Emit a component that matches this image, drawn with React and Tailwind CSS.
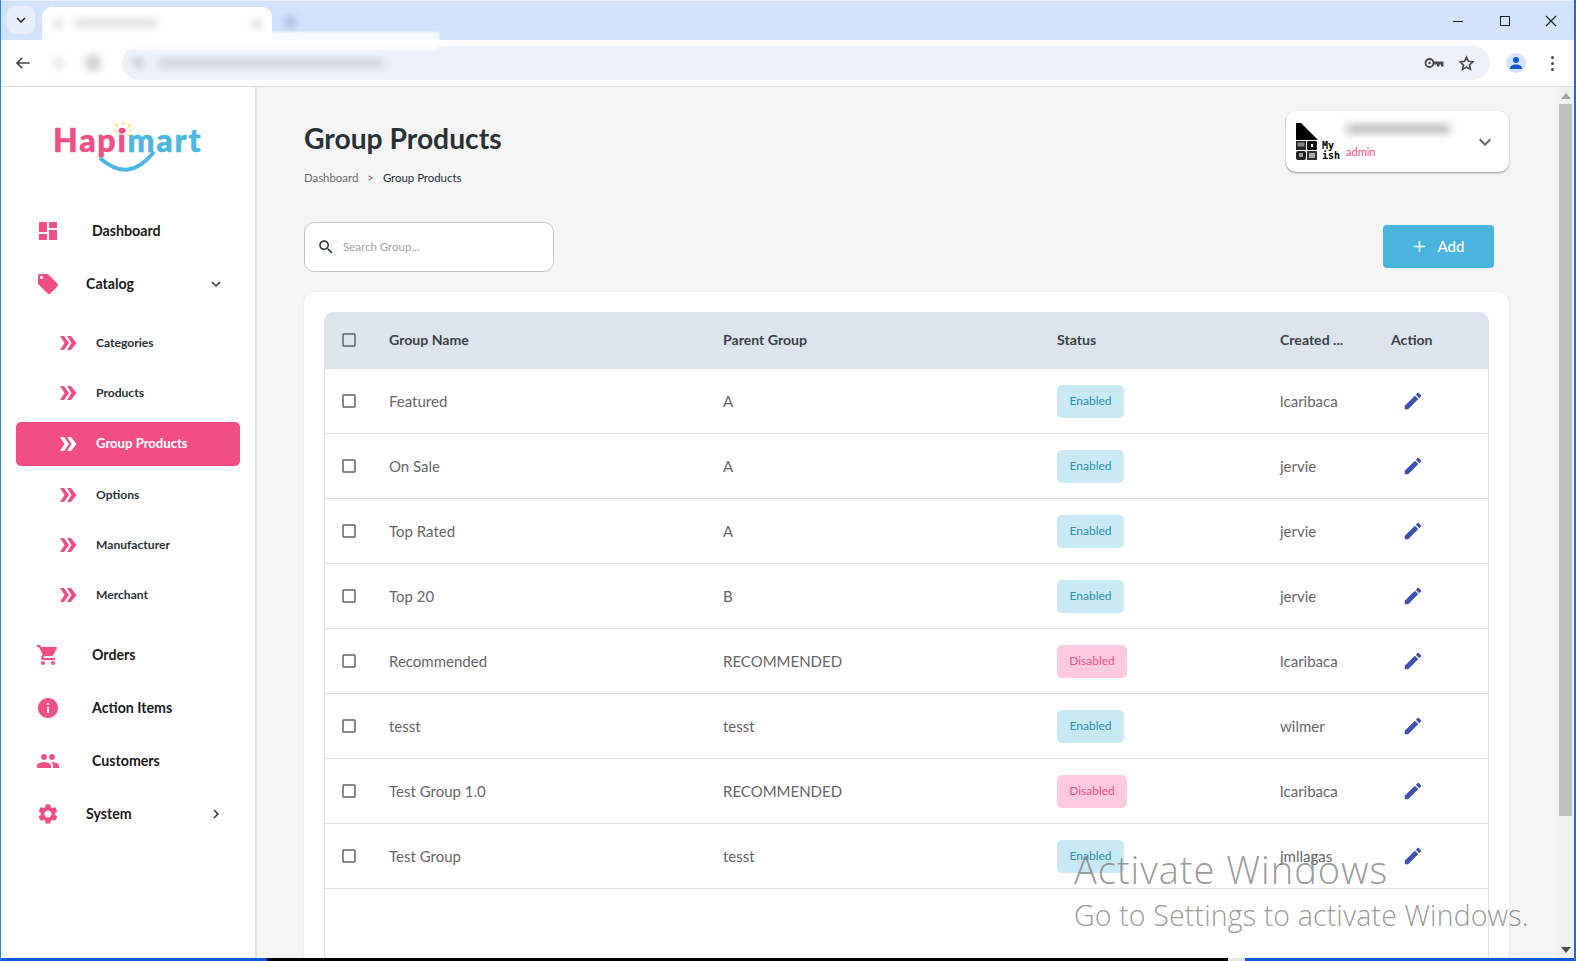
import { Plus } from 'lucide-react';

const paths = {
  dashboard: 'M3 13h8V3H3v10zm0 8h8v-6H3v6zm10 0h8V11h-8v10zm0-18v6h8V3h-8z',
  tag: 'M21.41 11.58l-9-9C12.05 2.22 11.55 2 11 2H4c-1.1 0-2 .9-2 2v7c0 .55.22 1.05.59 1.42l9 9c.36.36.86.58 1.41.58.55 0 1.05-.22 1.41-.59l7-7c.37-.36.59-.86.59-1.41 0-.55-.23-1.06-.59-1.42zM5.5 7C4.67 7 4 6.33 4 5.5S4.67 4 5.5 4 7 4.67 7 5.5 6.33 7 5.5 7z',
  cart: 'M7 18c-1.1 0-1.99.9-1.99 2S5.9 22 7 22s2-.9 2-2-.9-2-2-2zM1 2v2h2l3.6 7.59-1.35 2.45c-.16.28-.25.61-.25.96 0 1.1.9 2 2 2h12v-2H7.42c-.14 0-.25-.11-.25-.25l.03-.12.9-1.63h7.45c.75 0 1.41-.41 1.75-1.03l3.58-6.49c.08-.14.12-.31.12-.48 0-.55-.45-1-1-1H5.21l-.94-2H1zm16 16c-1.1 0-1.99.9-1.99 2s.89 2 1.99 2 2-.9 2-2-.9-2-2-2z',
  info: 'M12 2C6.48 2 2 6.48 2 12s4.48 10 10 10 10-4.48 10-10S17.52 2 12 2zm1 15h-2v-6h2v6zm0-8h-2V7h2v2z',
  people: 'M16 11c1.66 0 2.99-1.34 2.99-3S17.66 5 16 5c-1.66 0-3 1.34-3 3s1.34 3 3 3zm-8 0c1.66 0 2.99-1.34 2.99-3S9.66 5 8 5C6.34 5 5 6.34 5 8s1.34 3 3 3zm0 2c-2.33 0-7 1.17-7 3.5V19h14v-2.5c0-2.33-4.67-3.5-7-3.5zm8 0c-.29 0-.62.02-.97.05 1.16.84 1.97 1.97 1.97 3.45V19h6v-2.5c0-2.33-4.67-3.5-7-3.5z',
  gear: 'M19.14 12.94c.04-.3.06-.61.06-.94 0-.32-.02-.64-.07-.94l2.03-1.58c.18-.14.23-.41.12-.61l-1.92-3.32c-.12-.22-.37-.29-.59-.22l-2.39.96c-.5-.38-1.03-.7-1.62-.94l-.36-2.54c-.04-.24-.24-.41-.48-.41h-3.84c-.24 0-.43.17-.47.41l-.36 2.54c-.59.24-1.13.57-1.62.94l-2.39-.96c-.22-.08-.47 0-.59.22L2.74 8.87c-.12.21-.08.47.12.61l2.03 1.58c-.05.3-.09.63-.09.94s.02.64.07.94l-2.03 1.58c-.18.14-.23.41-.12.61l1.92 3.32c.12.22.37.29.59.22l2.39-.96c.5.38 1.03.7 1.62.94l.36 2.54c.05.24.24.41.48.41h3.84c.24 0 .44-.17.47-.41l.36-2.54c.59-.24 1.13-.56 1.62-.94l2.39.96c.22.08.47 0 .59-.22l1.92-3.32c.12-.22.07-.47-.12-.61l-2.01-1.58zM12 15.6c-1.98 0-3.6-1.62-3.6-3.6s1.62-3.6 3.6-3.6 3.6 1.62 3.6 3.6-1.62 3.6-3.6 3.6z',
  edit: 'M3 17.25V21h3.75L17.81 9.94l-3.75-3.75L3 17.25zM20.71 7.04c.39-.39.39-1.02 0-1.41l-2.34-2.34c-.39-.39-1.02-.39-1.41 0l-1.83 1.83 3.75 3.75 1.83-1.83z',
  search: 'M15.5 14h-.79l-.28-.27C15.41 12.59 16 11.11 16 9.5 16 5.91 13.09 3 9.5 3S3 5.91 3 9.5 5.91 16 9.5 16c1.61 0 3.09-.59 4.23-1.57l.27.28v.79l5 4.99L20.49 19l-4.99-5zm-6 0C7.01 14 5 11.99 5 9.5S7.01 5 9.5 5 14 7.01 14 9.5 11.99 14 9.5 14z',
  box: 'M19 5v14H5V5h14m0-2H5c-1.1 0-2 .9-2 2v14c0 1.1.9 2 2 2h14c1.1 0 2-.9 2-2V5c0-1.1-.9-2-2-2z',
  down: 'M16.59 8.59L12 13.17 7.41 8.59 6 10l6 6 6-6z',
  right: 'M10 6L8.59 7.41 13.17 12l-4.58 4.59L10 18l6-6z',
};

function Icon({ name, size = 24, className = '' }) {
  return (
    <svg width={size} height={size} viewBox="0 0 24 24" fill="currentColor" className={`shrink-0 ${className}`}>
      <path d={paths[name]} />
    </svg>
  );
}

function Chevrons({ className = '' }) {
  return (
    <svg width="17" height="14" viewBox="0 0 17 14" fill="currentColor" className={`shrink-0 ${className}`}>
      <polygon points="0,0 4,0 9,7 4,14 0,14 4.5,7" />
      <polygon points="7,0 11,0 16.5,7 11,14 7,14 11.5,7" />
    </svg>
  );
}

function Logo() {
  return (
    <div className="relative ml-[52px] mt-[34px] h-[60px] w-[150px]">
      <div className="absolute left-0 top-[-1px] whitespace-nowrap text-[32px] font-black leading-[40px] tracking-[1.8px] [-webkit-text-stroke:0.5px]">
        <span className="text-[#f04e85]">Hapi</span>
        <span className="text-[#4db6e2]">mart</span>
      </div>
      <svg width="150" height="60" viewBox="0 0 150 60" className="absolute left-0 top-0" fill="none">
        <path d="M48 38Q76 62 100 32" stroke="#4db6e2" strokeWidth="4" strokeLinecap="round" />
        <circle cx="70" cy="9.500" r="2.600" fill="#f04e85" />
        <path d="M70 4V1M75 6l3-3M65 6l-3-3M76 10h4M64 10h-4M74 13l3 2" stroke="#fdd23e" strokeWidth="1.200" />
      </svg>
    </div>
  );
}

function NavItem({ icon, label, indent = false, arrow }) {
  return (
    <div className="flex h-[53px] items-center pl-[35px] pr-[30px]">
      <Icon name={icon} className="text-[#f04e85]" />
      <span className={`flex-1 text-[14.2px] font-bold text-[#1a1a1a] ${indent ? 'ml-[26px]' : 'ml-[32px]'}`}>{label}</span>
      {arrow && <Icon name={arrow} size={18} className="text-[#333]" />}
    </div>
  );
}

function SubItem({ label, active = false }) {
  if (active) {
    return (
      <div className="my-[4px] ml-[15px] mr-[15px] flex h-[44px] items-center rounded-[5px] bg-[#f04e85] pl-[44px] text-white">
        <Chevrons />
        <span className="ml-[19px] text-[13.1px] font-bold">{label}</span>
      </div>
    );
  }
  return (
    <div className="flex h-[50px] items-center pl-[59px]">
      <Chevrons className="text-[#f04e85]" />
      <span className="ml-[19px] text-[12.1px] font-bold text-[#263238]">{label}</span>
    </div>
  );
}

function Sidebar() {
  return (
    <aside className="w-[256px] shrink-0 border-r-2 border-[#e3e3e3] bg-white">
      <Logo />
      <div className="mt-[23px]">
        <NavItem icon="dashboard" label="Dashboard" />
        <NavItem icon="tag" label="Catalog" indent arrow="down" />
        <div className="py-[8px]">
          <SubItem label="Categories" />
          <SubItem label="Products" />
          <SubItem label="Group Products" active />
          <SubItem label="Options" />
          <SubItem label="Manufacturer" />
          <SubItem label="Merchant" />
        </div>
        <NavItem icon="cart" label="Orders" />
        <NavItem icon="info" label="Action Items" />
        <NavItem icon="people" label="Customers" />
        <NavItem icon="gear" label="System" indent arrow="right" />
      </div>
    </aside>
  );
}

const rows = [
  ['Featured', 'A', 'Enabled', 'lcaribaca'],
  ['On Sale', 'A', 'Enabled', 'jervie'],
  ['Top Rated', 'A', 'Enabled', 'jervie'],
  ['Top 20', 'B', 'Enabled', 'jervie'],
  ['Recommended', 'RECOMMENDED', 'Disabled', 'lcaribaca'],
  ['tesst', 'tesst', 'Enabled', 'wilmer'],
  ['Test Group 1.0', 'RECOMMENDED', 'Disabled', 'lcaribaca'],
  ['Test Group', 'tesst', 'Enabled', 'jmllagas'],
];

const gridCols = 'grid grid-cols-[65px_334px_334px_223px_111px_1fr] items-center';

function Badge({ status }) {
  const on = status === 'Enabled';
  return (
    <span className={`inline-flex h-[33px] items-center justify-center rounded-[5px] text-[12px] ${on ? 'w-[67px] bg-[#c9e9f5] text-[#2b8fb6]' : 'w-[70px] bg-[#fdcadf] text-[#f0508a]'}`}>
      {status}
    </span>
  );
}

function Table() {
  return (
    <div className="flex flex-1 flex-col rounded-t-[12px] bg-white px-[20px] pt-[20px] shadow-[0_0_3px_rgba(0,0,0,0.08)]">
      <div className={`${gridCols} h-[57px] rounded-t-[10px] bg-[#dee4ee] pb-[2px] text-[14.1px] font-bold text-[#3b3f47]`}>
        <Icon name="box" size={18} className="ml-[16px] text-[#5f6368]" />
        <span>Group Name</span>
        <span>Parent Group</span>
        <span>Status</span>
        <span>Created ...</span>
        <span>Action</span>
      </div>
      <div className="flex-1 border-x border-[#e0e0e0]">
        {rows.map((r) => (
          <div key={r[0]} className={`${gridCols} -mx-px h-[65px] border-b border-[#e0e0e0] text-[15px] text-[#666]`}>
            <Icon name="box" size={18} className="-mt-[1px] ml-[16px] text-[#5f6368]" />
            <span>{r[0]}</span>
            <span>{r[1]}</span>
            <span className="flex"><Badge status={r[2]} /></span>
            <span>{r[3]}</span>
            <Icon name="edit" size={22} className="ml-[11px] text-[#3f51b5]" />
          </div>
        ))}
      </div>
    </div>
  );
}

function UserCard() {
  return (
    <div className="flex h-[61px] w-[223px] items-center rounded-[10px] bg-white pl-[10px] pr-[12px] shadow-[0_1px_2px_rgba(0,0,0,0.4)]">
      <div className="w-[44px] shrink-0">
        <svg width="22" height="17" viewBox="0 0 22 17" className="block">
          <polygon points="0,0 5,0 22,17 0,17" fill="#000" />
        </svg>
        <div className="mt-[1px] flex gap-[5px]">
          <svg width="21" height="19" viewBox="0 0 21 19" className="shrink-0">
            <rect x="0" y="0" width="10" height="9" fill="#222" />
            <rect x="1.500" y="1.500" width="7" height="4" fill="#888" />
            <rect x="11" y="0" width="10" height="9" rx="1" fill="#111" />
            <rect x="15" y="3" width="2" height="3" fill="#fff" />
            <rect x="0" y="10" width="10" height="9" rx="2" fill="#222" />
            <rect x="3" y="12" width="4" height="4" fill="#999" />
            <rect x="11" y="10" width="10" height="9" fill="#333" />
            <rect x="13" y="12" width="6" height="5" fill="#aaa" />
          </svg>
          <div className="font-['DejaVu_Sans_Mono',monospace] text-[10px] font-bold leading-[10px] text-black">My<br />ish</div>
        </div>
      </div>
      <div className="ml-[6px] flex-1">
        <div className="h-[8px] w-[105px] rounded-full bg-[#b0b0b0] blur-[4px]" />
        <div className="mt-[13px] text-[11px] leading-[12px] text-[#f04e85]">admin</div>
      </div>
      <Icon name="down" size={24} className="text-[#666]" />
    </div>
  );
}

function Main() {
  return (
    <main className="flex min-w-0 flex-1 flex-col bg-[#f5f5f5] pl-[47px] pr-[48px] pt-[24px]">
      <div className="flex items-start justify-between">
        <div>
          <h1 className="mt-[9px] text-[28.25px] font-bold leading-[36px] text-[#263238]">Group Products</h1>
          <div className="mt-[14px] flex text-[11.4px] leading-[16px]">
            <span className="text-[#6b6b6b]">Dashboard</span>
            <span className="mx-[9px] text-[#6b6b6b]">&gt;</span>
            <span className="text-[#263238]">Group Products</span>
          </div>
        </div>
        <UserCard />
      </div>
      <div className="mt-[36px] flex justify-between pr-[15px]">
        <div className="flex h-[50px] w-[250px] items-center rounded-[10px] border border-[#c4c4c4] bg-white pl-[12px]">
          <Icon name="search" size={18} className="text-[#263238]" />
          <span className="ml-[8px] text-[11.5px] text-[#a3a3a3]">Search Group...</span>
        </div>
        <div className="mt-[3px] flex h-[43px] w-[111px] items-center justify-center rounded-[4px] bg-[#4bb4de] pr-[2px] text-[15px] font-medium text-white">
          <Plus size={17} strokeWidth={2} className="mr-[10px]" />
          Add
        </div>
      </div>
      <div className="mt-[20px] flex flex-1 flex-col">
        <Table />
      </div>
    </main>
  );
}

function Scrollbar() {
  return (
    <div className="flex w-[17px] shrink-0 flex-col items-center bg-[#f1f1f1]">
      <svg width="10" height="6" viewBox="0 0 10 6" className="mt-[6px] text-[#a3a3a3]" fill="currentColor"><polygon points="5,0 10,6 0,6" /></svg>
      <div className="mt-[5px] h-[712px] w-[13px] bg-[#c1c1c1]" />
      <div className="flex-1" />
      <svg width="10" height="6" viewBox="0 0 10 6" className="mb-[5px] text-[#505050]" fill="currentColor"><polygon points="0,0 10,0 5,6" /></svg>
    </div>
  );
}

function BrowserChrome() {
  return (
    <>
      <div className="flex h-[40px] shrink-0 items-end border-t border-[#e8f0fe] bg-[#d3e3fd] pl-[6px]">
        <div className="mb-[6px] flex h-[28px] w-[28px] items-center justify-center rounded-[8px] bg-[#e9effc]">
          <Icon name="down" size={18} className="text-[#1f1f1f]" />
        </div>
        <div className="ml-[7px] flex h-[33px] w-[230px] items-center rounded-t-[10px] bg-white px-[10px]">
          <div className="h-[12px] w-[12px] rounded-full bg-[#e8e8e8] blur-[3px]" />
          <div className="ml-[10px] h-[7px] w-[84px] bg-[#d8d8d8] blur-[4px]" />
          <div className="ml-auto h-[10px] w-[10px] rounded-full bg-[#dddddd] blur-[3px]" />
        </div>
        <div className="mb-[11px] ml-[11px] h-[14px] w-[14px] rounded-full bg-[#b3c3e4] blur-[3px]" />
        <div className="flex-1" />
        <div className="mb-[12px] flex items-center gap-[32px] pr-[16px] text-[#1f1f1f]">
          <div className="h-[1px] w-[10px] bg-[#1f1f1f]" />
          <div className="ml-[5px] h-[10px] w-[10px] border border-[#1f1f1f]" />
          <svg width="14" height="14" viewBox="0 0 14 14" stroke="currentColor" strokeWidth="1.100" className="ml-[2px]"><path d="M2 2l10 10M12 2L2 12" /></svg>
        </div>
      </div>
      <div className="flex h-[47px] shrink-0 items-center border-b border-[#dcdcdc] bg-white pl-[13px] pr-[20px]">
        <svg width="18" height="18" viewBox="0 0 24 24" fill="none" stroke="#474747" strokeWidth="2.200" className="shrink-0"><path d="M21 12H4M11 5l-7 7 7 7" /></svg>
        <div className="ml-[20px] h-[14px] w-[14px] rounded-full bg-[#f0f0f0] blur-[3px]" />
        <div className="ml-[19px] h-[16px] w-[16px] rounded-full bg-[#cccccc] blur-[4px]" />
        <div className="ml-[21px] flex h-[34px] flex-1 items-center rounded-full bg-[#edf2fa] pl-[10px] pr-[15px]">
          <div className="h-[12px] w-[12px] rounded-full bg-[#ccd1dc] blur-[3px]" />
          <div className="ml-[14px] h-[7px] w-[225px] bg-[#c5cad6] blur-[4px]" />
          <div className="flex-1" />
          <svg width="20" height="12" viewBox="0 0 20 12" fill="none" className="shrink-0"><circle cx="5.500" cy="6" r="4" stroke="#474747" strokeWidth="1.800" /><circle cx="5.500" cy="6" r="1.200" fill="#474747" /><path d="M10 4.500h9.500v5h-2.500v-2h-1.500v2h-2.500v-2H10z" fill="#474747" /></svg>
          <svg width="17" height="17" viewBox="0 0 24 24" fill="none" stroke="#474747" strokeWidth="2.200" className="ml-[14px] shrink-0"><path d="M12 3l2.700 6 6.300.7-4.700 4.300 1.300 6.400L12 17.200 6.400 20.400 7.700 14 3 9.700 9.300 9z" /></svg>
        </div>
        <div className="ml-[16px] flex h-[20px] w-[20px] items-center justify-center rounded-full bg-[#d3e3fd]">
          <svg width="14" height="14" viewBox="0 0 14 14" fill="#0b57d0"><circle cx="7" cy="4" r="3" /><path d="M1 13c0-3.500 3-4.500 6-4.500s6 1 6 4.500z" /></svg>
        </div>
        <div className="ml-[25px] flex flex-col gap-[3px]">
          <div className="h-[3px] w-[3px] rounded-full bg-[#474747]" />
          <div className="h-[3px] w-[3px] rounded-full bg-[#474747]" />
          <div className="h-[3px] w-[3px] rounded-full bg-[#474747]" />
        </div>
      </div>
    </>
  );
}

export default function App() {
  return (
    <div className="relative flex h-[961px] w-[1576px] flex-col overflow-hidden border-l border-r-2 border-l-[#1a8ae5] border-r-[#1a6ee5] bg-white font-['Lato',sans-serif]">
      <BrowserChrome />
      <div className="flex min-h-0 flex-1 overflow-hidden">
        <Sidebar />
        <Main />
        <Scrollbar />
      </div>
      <div className="flex h-[3px] shrink-0">
        <div className="w-[266px] bg-[#0a5be0]" />
        <div className="w-[961px] bg-black" />
        <div className="w-[17px] bg-[#e8e8e8]" />
        <div className="flex-1 bg-[#0a5be0]" />
      </div>
      {/* redacted tab/address strip */}
      <div className="absolute left-[50px] top-[32px] h-[18px] w-[388px] bg-white/80 blur-[1px]" />
      <div className="pointer-events-none absolute left-[1073px] top-[845px] font-['Open_Sans',sans-serif] font-light text-[#808080]/80">
        <div className="text-[38px] leading-[48px] tracking-[1px]">Activate Windows</div>
        <div className="mt-[2px] whitespace-nowrap text-[28.500px] leading-[40px] tracking-[0.15px]">Go to Settings to activate Windows.</div>
      </div>
    </div>
  );
}
